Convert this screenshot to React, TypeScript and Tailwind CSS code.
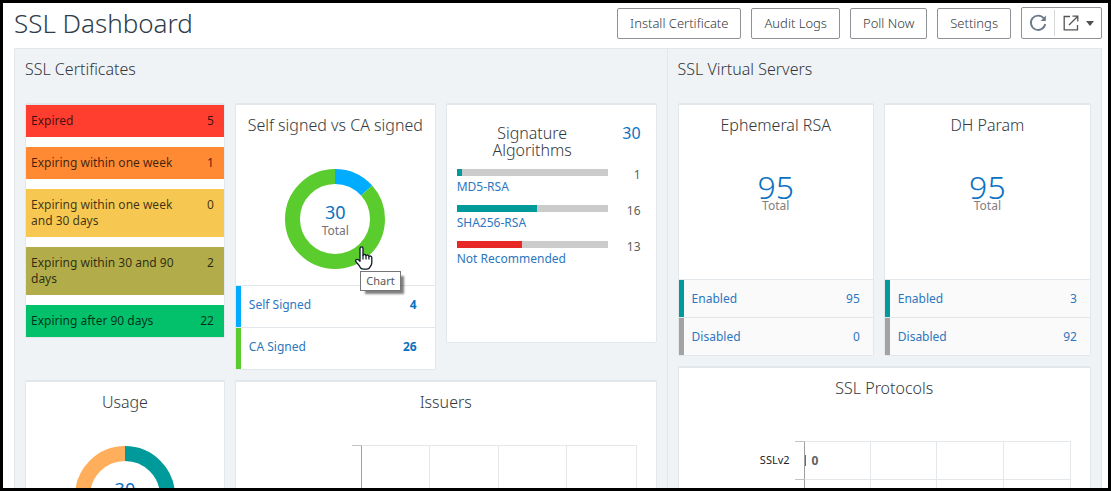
import type { ReactNode } from "react";
import clsx from "clsx";

interface Slice {
  value: number;
  color: string;
}

interface LegendItem {
  label: string;
  value: number;
  marker: string;
}

interface BarRow {
  label: string;
  value: number | null;
}

const expiry = [
  { label: "Expired", count: 5, color: "bg-[#ff3e30]" },
  { label: "Expiring within one week", count: 1, color: "bg-[#ff8a33]" },
  { label: "Expiring within one week and 30 days", count: 0, color: "bg-[#f6c851]" },
  { label: "Expiring within 30 and 90 days", count: 2, color: "bg-[#b2ad4a]" },
  { label: "Expiring after 90 days", count: 22, color: "bg-[#02c16a]" },
];

const algorithms = [
  { label: "MD5-RSA", count: 1, color: "bg-[#009a9b]" },
  { label: "SHA256-RSA", count: 16, color: "bg-[#009a9b]" },
  { label: "Not Recommended", count: 13, color: "bg-[#e82727]" },
];

const algorithmTotal = 30;

const actions = ["Install Certificate", "Audit Logs", "Poll Now", "Settings"];

function Card({ children, className }: { children: ReactNode; className?: string }) {
  return (
    <article
      className={clsx(
        "rounded-xs border border-t-2 border-[#e1e7ea] bg-white",
        className
      )}
    >
      {children}
    </article>
  );
}

function CardTitle({ children }: { children: ReactNode }) {
  return (
    <h3 className="pt-[10px] text-center text-base leading-5 font-light text-[#33383d]">
      {children}
    </h3>
  );
}

// Ring chart, slices run clockwise from the top
function Donut({ slices, total }: { slices: Slice[]; total: number }) {
  const radius = 42.5;
  const length = 2 * Math.PI * radius;
  const sum = slices.reduce((acc, s) => acc + s.value, 0);
  let start = 0;

  return (
    <div className="mx-auto mt-[34px] grid size-[100px] place-items-center">
      <svg viewBox="0 0 100 100" className="col-start-1 row-start-1 size-full -rotate-90">
        {slices.map((slice) => {
          const part = (slice.value / sum) * length;
          const offset = -start;
          start += part;
          return (
            <circle
              key={slice.color}
              cx="50"
              cy="50"
              r={radius}
              fill="none"
              stroke={slice.color}
              strokeWidth="15"
              strokeDasharray={`${part} ${length - part}`}
              strokeDashoffset={offset}
            />
          );
        })}
      </svg>
      <div className="col-start-1 row-start-1 pt-1 text-center">
        <p className="text-lg leading-5 text-[#0b71c1]">{total}</p>
        <p className="text-xs leading-[18px] text-[#737373]">Total</p>
      </div>
    </div>
  );
}

function Legend({
  items,
  strong,
  className,
}: {
  items: LegendItem[];
  strong?: boolean;
  className?: string;
}) {
  return (
    <ul className={className}>
      {items.map((item) => (
        <li
          key={item.label}
          className={clsx(
            "flex border-t border-[#e1e7ea] text-xs",
            strong ? "h-[42px]" : "h-[38px] bg-[#fafafa]"
          )}
        >
          <span className={clsx("w-[5px]", item.marker)} />
          <a
            href="#"
            className={clsx(
              "flex flex-1 items-center justify-between pl-2 text-[#2c77c0]",
              strong ? "pr-[18px] pb-[3px]" : "pr-[13px]"
            )}
          >
            <span>{item.label}</span>
            <span className={clsx(strong && "font-bold text-[#0b71c1]")}>{item.value}</span>
          </a>
        </li>
      ))}
    </ul>
  );
}

function ParamCard({
  title,
  enabled,
  disabled,
}: {
  title: string;
  enabled: number;
  disabled: number;
}) {
  return (
    <Card>
      <CardTitle>{title}</CardTitle>
      <div className="mt-[38px] text-center">
        <p className="text-[32px] leading-7 font-light text-[#0b71c1]">{enabled + disabled}</p>
        <p className="text-xs leading-[10px] text-[#808080]">Total</p>
      </div>
      <Legend
        className="mt-[68px]"
        items={[
          { label: "Enabled", value: enabled, marker: "bg-[#009a9b]" },
          { label: "Disabled", value: disabled, marker: "bg-[#a3a3a3]" },
        ]}
      />
    </Card>
  );
}

function BarGrid({ rows, tall }: { rows: BarRow[]; tall?: boolean }) {
  return (
    <div className="pr-[19px]">
      {rows.map((row, i) => (
        <div key={i} className={clsx("flex", tall ? "h-20" : "h-[38px]")}>
          <div className="flex w-[116px] items-center justify-end pr-[5px] text-[11px] text-[#222]">
            {row.label}
          </div>
          <div className="w-[9px] border-t border-[#c0c4c6]" />
          <div className="grid flex-1 grid-cols-4 border-t border-r border-l border-[#e4e8ea] border-l-[#a0a0a0]">
            <div className="flex items-center gap-[6px] border-r border-[#e4e8ea]">
              {row.value !== null && (
                <>
                  <span className="h-[11px] w-px bg-[#009a9b]" />
                  <span className="text-xs font-bold text-[#606060]">{row.value}</span>
                </>
              )}
            </div>
            <div className="border-r border-[#e4e8ea]" />
            <div className="border-r border-[#e4e8ea]" />
          </div>
        </div>
      ))}
    </div>
  );
}

function HandCursor() {
  return (
    <svg viewBox="0 0 19 24" className="absolute top-[77px] left-[69px] h-6 w-[19px]">
      <path
        d="M6 2.3C6 .4 9 .4 9 2.3v7c.3-1.2 2.8-1.1 3 .4.6-1 2.7-.8 2.9.8.7-.9 2.9-.6 2.9 1.2v5c0 2-1 3.2-1.8 4.3-.6 1.5-1.7 2.2-3.2 2.2H9.3c-1.8 0-2.7-.8-3.3-2.2-.7-1.7-2.3-3.3-3.9-5.1-1.5-1.5.5-3.3 2.2-2.1L6 15.4z"
        fill="#fff"
        stroke="#111827"
        strokeWidth="1.3"
        strokeLinejoin="round"
      />
      <path d="M9 9v4.5M12 9.5v4M14.9 10.5v3" stroke="#111827" strokeWidth="1.2" />
    </svg>
  );
}

function Toolbar() {
  return (
    <div className="flex items-end gap-[10px]">
      {actions.map((action) => (
        <button
          key={action}
          className="h-[31px] rounded-xs border border-[#8f9296] px-3 text-[13px] font-light text-[#33383d]"
        >
          {action}
        </button>
      ))}
      <div className="flex h-8 items-center rounded-xs border border-[#8f9296]">
        <button aria-label="Refresh" className="flex w-8 justify-center">
          <svg viewBox="0 0 18 18" className="size-[18px]">
            <path
              d="M15 4.6A7.2 7.2 0 1 0 16.2 10"
              fill="none"
              stroke="#6c7a8b"
              strokeWidth="1.8"
            />
            <path d="M16.9 1.6v5.3h-5.3z" fill="#6c7a8b" />
          </svg>
        </button>
        <span className="h-[26px] w-px bg-[#d5d7d9]" />
        <button aria-label="Export" className="flex w-[46px] items-center justify-center gap-[7px]">
          <svg viewBox="0 0 16 16" className="size-4" fill="none" stroke="#555" strokeWidth="1.3">
            <path d="M7 1.5H1.2v13.3h13.3V10M6 10l8.3-8.3M9.5 1.2h5.3v5.3" />
          </svg>
          <svg viewBox="0 0 8 5" className="h-[5px] w-2" fill="#505050">
            <path d="M0 0h8L4 5z" />
          </svg>
        </button>
      </div>
    </div>
  );
}

export default function App() {
  return (
    <div className="h-screen overflow-hidden border-[3px] border-black bg-white pr-[6px] pl-[11px] font-['Noto_Sans','Open_Sans',sans-serif]">
      <header className="flex h-[45px] items-start justify-between pt-1">
        <h1 className="text-[26px] leading-8 font-light text-[#2f3d4a]">SSL Dashboard</h1>
        <Toolbar />
      </header>

      <main className="grid grid-cols-[3fr_2fr] border border-[#e1e7ea] bg-[#eff3f6]">
        <section className="px-[10px] pb-3">
          <h2 className="pt-[10px] pb-6 text-base leading-5 font-light text-[#33383d]">
            SSL Certificates
          </h2>
          <div className="grid grid-cols-[200fr_201fr_211fr] items-start gap-[10px]">
            <Card>
              <ul className="flex flex-col gap-[10px] text-xs leading-4 text-black/75">
                {expiry.map((row) => (
                  <li
                    key={row.label}
                    className={clsx("flex justify-between py-2 pr-[10px] pl-[5px]", row.color)}
                  >
                    <span className="w-[150px]">{row.label}</span>
                    <span>{row.count}</span>
                  </li>
                ))}
              </ul>
            </Card>

            <Card>
              <CardTitle>Self signed vs CA signed</CardTitle>
              <div className="relative mx-auto w-[100px]">
                <Donut
                  total={30}
                  slices={[
                    { value: 4, color: "#00acff" },
                    { value: 26, color: "#5bcc2d" },
                  ]}
                />
                <div className="absolute top-0 left-0">
                  <HandCursor />
                  <span
                    role="tooltip"
                    className="absolute top-[102px] left-[75px] border border-[#767676] bg-white px-[5px] text-[11px] leading-[18px] text-[#575757] shadow-[4px_4px_2px_-1px_rgba(0,0,0,0.5)]"
                  >
                    Chart
                  </span>
                </div>
              </div>
              <Legend
                strong
                className="mt-4"
                items={[
                  { label: "Self Signed", value: 4, marker: "bg-[#00acff]" },
                  { label: "CA Signed", value: 26, marker: "bg-[#5bcc2d]" },
                ]}
              />
            </Card>

            <Card className="h-60 pt-5 pr-[15px] pl-[10px]">
              <div className="flex text-base leading-[17px]">
                <h3 className="flex-1 px-6 text-center font-light text-[#33383d]">
                  Signature Algorithms
                </h3>
                <span className="w-[33px] text-right text-[#0b71c1]">{algorithmTotal}</span>
              </div>
              <ul className="mt-[10px] text-xs">
                {algorithms.map((alg) => (
                  <li key={alg.label} className="flex h-9">
                    <div className="flex-1">
                      <div className="h-[7px] bg-[#cbcbcb]">
                        <div
                          className={clsx("h-full", alg.color)}
                          style={{ width: `${(alg.count / algorithmTotal) * 100}%` }}
                        />
                      </div>
                      <a href="#" className="block pt-[3px] leading-4 text-[#2c77c0]">
                        {alg.label}
                      </a>
                    </div>
                    <span className="w-[33px] text-right leading-3 text-[#606060]">
                      {alg.count}
                    </span>
                  </li>
                ))}
              </ul>
            </Card>

            <Card className="pb-5">
              <CardTitle>Usage</CardTitle>
              <Donut
                total={30}
                slices={[
                  { value: 15, color: "#009a9b" },
                  { value: 15, color: "#ffae5c" },
                ]}
              />
            </Card>

            <Card className="col-span-2 pb-5">
              <CardTitle>Issuers</CardTitle>
              <div className="pt-[33px]">
                <BarGrid tall rows={[{ label: "", value: null }]} />
              </div>
            </Card>
          </div>
        </section>

        <section className="border-l border-[#e1e7ea] px-[10px] pb-3">
          <h2 className="pt-[10px] pb-6 text-base leading-5 font-light text-[#33383d]">
            SSL Virtual Servers
          </h2>
          <div className="grid grid-cols-[196fr_207fr] items-start gap-[10px]">
            <ParamCard title="Ephemeral RSA" enabled={95} disabled={0} />
            <ParamCard title="DH Param" enabled={3} disabled={92} />

            <Card className="col-span-2 pb-5">
              <CardTitle>SSL Protocols</CardTitle>
              <div className="pt-[43px]">
                <BarGrid
                  rows={[
                    { label: "SSLv2", value: 0 },
                    { label: "", value: null },
                  ]}
                />
              </div>
            </Card>
          </div>
        </section>
      </main>
    </div>
  );
}
